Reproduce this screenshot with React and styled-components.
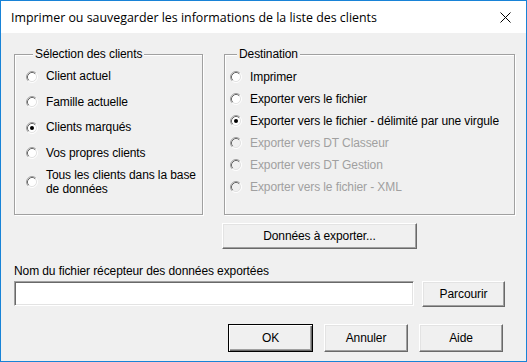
import React from "react";
import styled, { createGlobalStyle } from "styled-components";

const GlobalStyle = createGlobalStyle`
  html, body { margin: 0; padding: 0; background: #ffffff; }
  body { width: 527px; height: 362px; overflow: hidden; }
  * { box-sizing: border-box; }
`;

const Window = styled.div`
  width: 527px;
  height: 362px;
  border: 1px solid #1883d7;
  background: #f0f0f0;
  display: flex;
  flex-direction: column;
  font-family: "Liberation Sans", Arial, sans-serif;
  font-size: 12px;
  letter-spacing: -0.1px;
  color: #000;
`;

const TitleBar = styled.div`
  height: 32px;
  flex: none;
  background: #ffffff;
  display: flex;
  align-items: center;
  justify-content: space-between;
  padding: 1px 15px 0 10px;
`;

const Title = styled.span`
  font-family: "Segoe UI", "Open Sans", "Noto Sans", sans-serif;
  font-size: 12.4px;
  letter-spacing: 0;
  color: #000;
`;

const CloseIcon = () => (
  <svg width="11" height="11" viewBox="0 0 11 11">
    <path d="M0.5 0.5 L10.5 10.5 M10.5 0.5 L0.5 10.5" stroke="#000" strokeWidth="1" fill="none" />
  </svg>
);

const Body = styled.div`
  padding: 15px 0 0 13px;
  display: flex;
  flex-direction: column;
`;

const GroupsRow = styled.div`
  display: flex;
  gap: 21px;
  align-items: flex-start;
`;

const Group = styled.fieldset`
  margin: 0;
  width: ${(p) => p.$w}px;
  height: 167px;
  border: 1px solid #a0a0a0;
  box-shadow: 1px 1px 0 #ffffff, inset 1px 1px 0 #ffffff;
  padding: ${(p) => p.$pt}px 0 0 ${(p) => p.$pl}px;
  display: flex;
  flex-direction: column;
`;

const Legend = styled.legend`
  margin-left: 7px;
  padding: 0 2px;
  line-height: 13px;
  background: #f0f0f0;
`;

const RadioRow = styled.label`
  display: flex;
  align-items: center;
  gap: 8px;
  min-height: ${(p) => p.$h}px;
  margin-top: ${(p) => p.$mt || 0}px;
  color: ${(p) => (p.$disabled ? "#a0a0a0" : "#000")};
`;

const RadioText = styled.span`
  line-height: ${(p) => (p.$multi ? 14 : 13)}px;
  max-width: ${(p) => (p.$multi ? "154px" : "none")};
  white-space: ${(p) => (p.$multi ? "normal" : "nowrap")};
`;

const RadioMark = ({ checked, disabled }) => (
  <svg width="12" height="12" viewBox="0 0 12 12" style={{ flex: "none" }}>
    <circle cx="6" cy="6" r="4.5" fill={disabled ? "#f0f0f0" : "#ffffff"} />
    <path d="M2.11 9.89 A5.5 5.5 0 0 1 9.89 2.11" stroke="#a0a0a0" fill="none" />
    <path d="M9.89 2.11 A5.5 5.5 0 0 1 2.11 9.89" stroke="#ffffff" fill="none" />
    <path d="M2.82 9.18 A4.5 4.5 0 0 1 9.18 2.82" stroke="#696969" fill="none" />
    <path d="M9.18 2.82 A4.5 4.5 0 0 1 2.82 9.18" stroke="#e3e3e3" fill="none" />
    {checked && <circle cx="6" cy="6" r="2" fill={disabled ? "#a0a0a0" : "#000"} />}
  </svg>
);

const Radio = ({ label, checked, disabled, h, mt, multi }) => (
  <RadioRow $h={h} $mt={mt} $disabled={disabled}>
    <RadioMark checked={checked} disabled={disabled} />
    <RadioText $multi={multi}>{label}</RadioText>
  </RadioRow>
);

const Button = styled.button`
  font: inherit;
  letter-spacing: inherit;
  color: #000;
  background: #f0f0f0;
  width: ${(p) => p.$w}px;
  height: ${(p) => p.$h}px;
  padding: 0;
  margin: 0;
  border-style: solid;
  border-width: 1px;
  border-color: ${(p) => (p.$default ? "#000 #000 #000 #000" : "#fff #696969 #696969 #fff")};
  box-shadow: ${(p) =>
    p.$default
      ? "inset 1px 1px 0 #fff, inset -1px -1px 0 #696969, inset -2px -2px 0 #a0a0a0"
      : "inset -1px -1px 0 #a0a0a0, inset 1px 1px 0 #e3e3e3"};
  display: flex;
  align-items: center;
  justify-content: center;
  flex: none;
`;

const ExportButtonRow = styled.div`
  margin-top: 8px;
  padding-left: 208px;
  display: flex;
`;

const FieldLabel = styled.div`
  margin-top: 16px;
  line-height: 13px;
`;

const InputRow = styled.div`
  margin-top: 3px;
  display: flex;
  align-items: flex-start;
  gap: 8px;
`;

const TextInput = styled.div`
  width: 400px;
  height: 25px;
  background: #fff;
  border-style: solid;
  border-width: 1px;
  border-color: #a0a0a0 #fff #fff #a0a0a0;
  box-shadow: inset 1px 1px 0 #696969, inset -1px -1px 0 #e3e3e3;
`;

const ActionRow = styled.div`
  margin-top: 17px;
  padding-left: 214px;
  display: flex;
  gap: 11px;
`;

export default function App() {
  return (
    <>
      <GlobalStyle />
      <Window>
        <TitleBar>
          <Title>Imprimer ou sauvegarder les informations de la liste des clients</Title>
          <CloseIcon />
        </TitleBar>
        <Body>
          <GroupsRow>
            <Group $w={189} $pt={3} $pl={11}>
              <Legend>Sélection des clients</Legend>
              <Radio h={25.5} label="Client actuel" />
              <Radio h={25.5} label="Famille actuelle" />
              <Radio h={25.5} label="Clients marqués" checked />
              <Radio h={25.5} label="Vos propres clients" />
              <Radio h={28} mt={2} multi label="Tous les clients dans la base de données" />
            </Group>
            <Group $w={291} $pt={5} $pl={5}>
              <Legend>Destination</Legend>
              <Radio h={22} label="Imprimer" />
              <Radio h={22} label="Exporter vers le fichier" />
              <Radio h={22} label="Exporter vers le fichier - délimité par une virgule" checked />
              <Radio h={22} label="Exporter vers DT Classeur" disabled />
              <Radio h={22} label="Exporter vers DT Gestion" disabled />
              <Radio h={22} label="Exporter vers le fichier - XML" disabled />
            </Group>
          </GroupsRow>
          <ExportButtonRow>
            <Button $w={195} $h={26}>Données à exporter...</Button>
          </ExportButtonRow>
          <FieldLabel>Nom du fichier récepteur des données exportées</FieldLabel>
          <InputRow>
            <TextInput />
            <Button $w={83} $h={26}>Parcourir</Button>
          </InputRow>
          <ActionRow>
            <Button $w={85} $h={28} $default>OK</Button>
            <Button $w={84} $h={28}>Annuler</Button>
            <Button $w={84} $h={28}>Aide</Button>
          </ActionRow>
        </Body>
      </Window>
    </>
  );
}
